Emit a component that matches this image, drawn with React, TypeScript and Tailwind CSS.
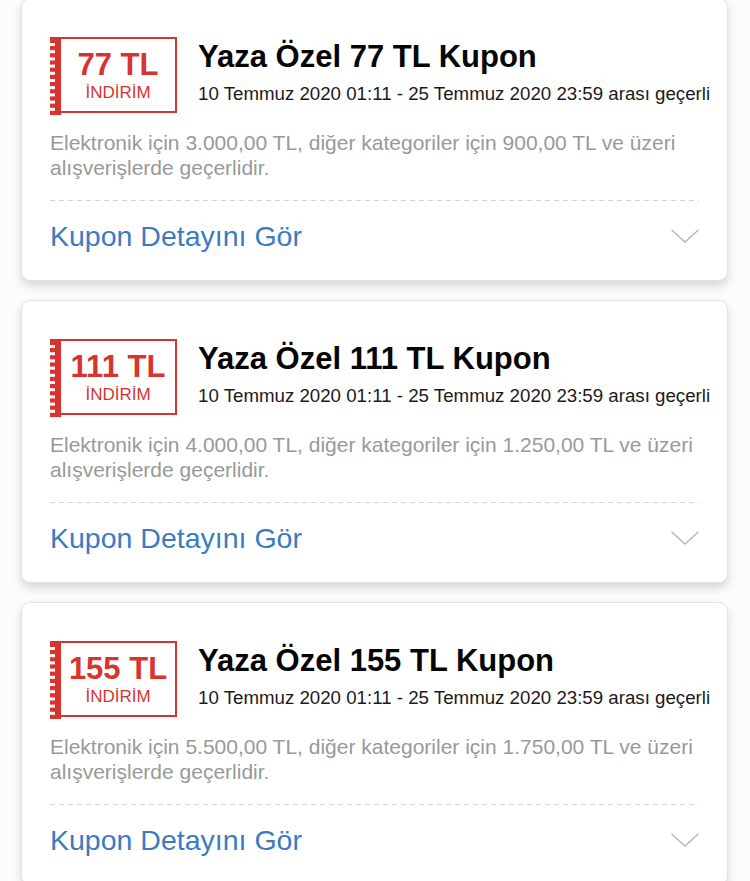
import React from 'react';

type Coupon = {
    amount: string;
    electronic: string;
    other: string;
};

const coupons: Coupon[] = [
    { amount: '77', electronic: '3.000,00', other: '900,00' },
    { amount: '111', electronic: '4.000,00', other: '1.250,00' },
    { amount: '155', electronic: '5.500,00', other: '1.750,00' },
];

const FONT = "font-['Helvetica','Liberation_Sans','Arial',sans-serif]";

// perforated left edge of the badge
const Perforation: React.FC = () => (
    <svg width="11" height="76" viewBox="0 0 11 76" className="shrink-0">
        <rect x="0" y="0" width="11" height="76" fill="#d8342f" />
        {Array.from({ length: 10 }).map((_, i) => (
            <rect key={i} x="0" y={4 + i * 7.2} width="5" height="3" fill="#ffffff" />
        ))}
    </svg>
);

const Badge: React.FC<{ amount: string }> = ({ amount }) => (
    <div className="flex w-[127px] h-[76px] shrink-0 border-2 border-l-0 border-[#d8342f] bg-white">
        <Perforation />
        <div className="flex-1 flex flex-col items-center pt-[10px]">
            <span className="text-[31px] leading-[32px] font-bold text-[#d8342f] whitespace-nowrap">{amount} TL</span>
            <span className="text-[17px] leading-[18px] text-[#d8342f] mt-[3px]">İNDİRİM</span>
        </div>
    </div>
);

const Chevron: React.FC = () => (
    <svg width="28" height="14" viewBox="0 0 28 14" fill="none">
        <polyline points="0.5,0.8 14,13 27.5,0.8" stroke="#b4b4b4" strokeWidth="1.3" />
    </svg>
);

const CouponCard: React.FC<{ coupon: Coupon }> = ({ coupon }) => (
    <div className="h-[283px] shrink-0 bg-white rounded-[9px] border border-[#e3e3e3] shadow-[0_5px_10px_rgba(0,0,0,0.15)] px-[28px] pt-[38px]">
        <div className="flex items-start">
            <Badge amount={coupon.amount} />
            <div className="ml-[21px] mt-[3px]">
                <h3 className="text-[31px] leading-[34px] font-bold text-[#050505] whitespace-nowrap">Yaza Özel {coupon.amount} TL Kupon</h3>
                <p className="mt-[9px] text-[18.7px] leading-[22px] text-[#1a1a1a] whitespace-nowrap">
                    10 Temmuz 2020 01:11 - 25 Temmuz 2020 23:59 arası geçerli
                </p>
            </div>
        </div>
        <p className="mt-[17px] text-[21px] leading-[25px] text-[#999999]">
            Elektronik için {coupon.electronic} TL, diğer kategoriler için {coupon.other} TL ve üzeri alışverişlerde geçerlidir.
        </p>
        <div className="mt-[20px] h-px bg-[repeating-linear-gradient(to_right,#d2d2d2_0_5px,transparent_5px_9px)]" />
        <div className="mt-[19px] flex items-center justify-between">
            <span className="text-[28.5px] leading-[32px] text-[#3b7bc2]">Kupon Detayını Gör</span>
            <Chevron />
        </div>
    </div>
);

export default function App() {
    return (
        <div className={`${FONT} min-h-screen bg-[#fcfcfc] overflow-hidden`}>
            <div className="flex flex-col gap-[19px] px-[21px] -mt-[2px] pr-[22px]">
                {coupons.map(c => (
                    <CouponCard key={c.amount} coupon={c} />
                ))}
            </div>
        </div>
    );
}
